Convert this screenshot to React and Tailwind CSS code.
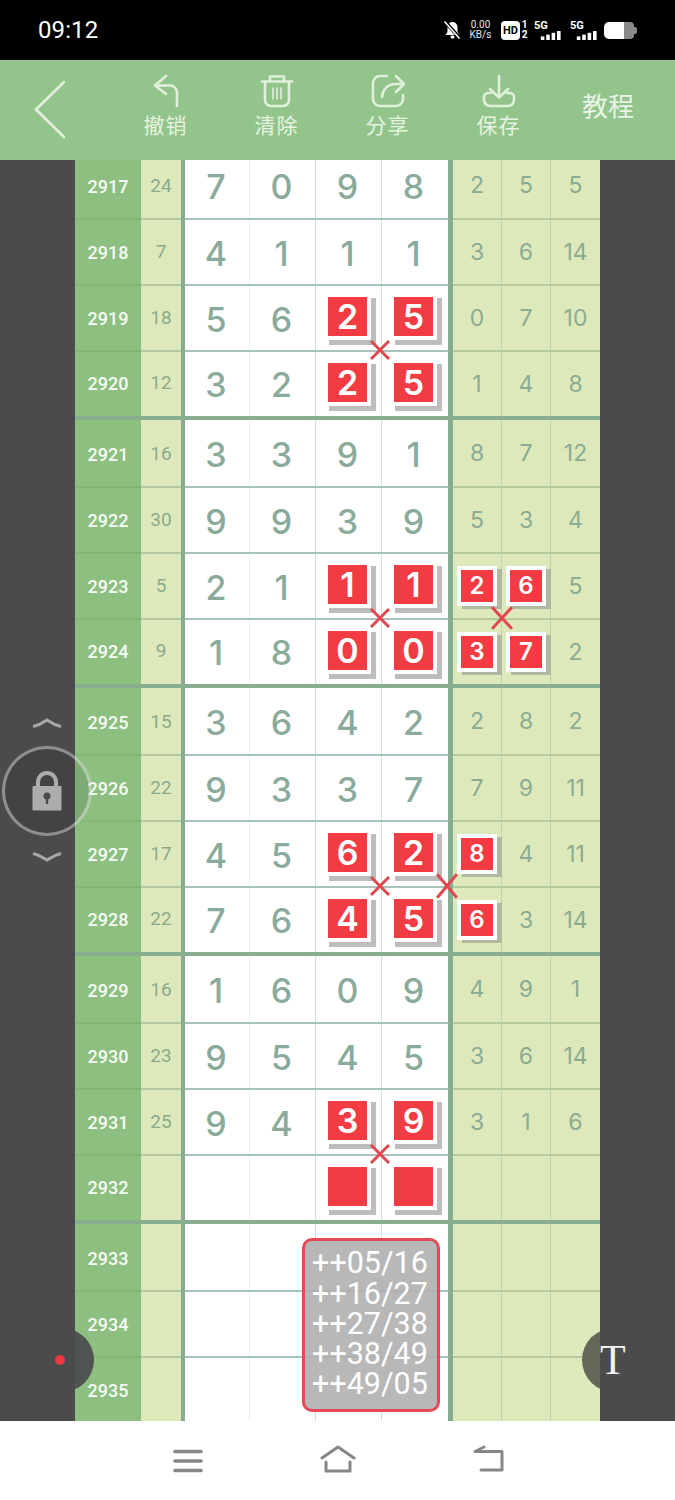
import React from 'react';

// [issue, sum, digits, right digits, red digits, red right digits]
const groups = [
  [
    { id: 2917, sum: 24, d: [7, 0, 9, 8], r: [2, 5, 5] },
    { id: 2918, sum: 7, d: [4, 1, 1, 1], r: [3, 6, 14] },
    { id: 2919, sum: 18, d: [5, 6, 2, 5], r: [0, 7, 10], red: [2, 3] },
    { id: 2920, sum: 12, d: [3, 2, 2, 5], r: [1, 4, 8], red: [2, 3] },
  ],
  [
    { id: 2921, sum: 16, d: [3, 3, 9, 1], r: [8, 7, 12] },
    { id: 2922, sum: 30, d: [9, 9, 3, 9], r: [5, 3, 4] },
    { id: 2923, sum: 5, d: [2, 1, 1, 1], r: [2, 6, 5], red: [2, 3], redR: [0, 1] },
    { id: 2924, sum: 9, d: [1, 8, 0, 0], r: [3, 7, 2], red: [2, 3], redR: [0, 1] },
  ],
  [
    { id: 2925, sum: 15, d: [3, 6, 4, 2], r: [2, 8, 2] },
    { id: 2926, sum: 22, d: [9, 3, 3, 7], r: [7, 9, 11] },
    { id: 2927, sum: 17, d: [4, 5, 6, 2], r: [8, 4, 11], red: [2, 3], redR: [0] },
    { id: 2928, sum: 22, d: [7, 6, 4, 5], r: [6, 3, 14], red: [2, 3], redR: [0] },
  ],
  [
    { id: 2929, sum: 16, d: [1, 6, 0, 9], r: [4, 9, 1] },
    { id: 2930, sum: 23, d: [9, 5, 4, 5], r: [3, 6, 14] },
    { id: 2931, sum: 25, d: [9, 4, 3, 9], r: [3, 1, 6], red: [2, 3] },
    { id: 2932, sum: '', d: ['', '', '', ''], r: ['', '', ''], red: [2, 3] },
  ],
  [
    { id: 2933, sum: '', d: ['', '', '', ''], r: ['', '', ''] },
    { id: 2934, sum: '', d: ['', '', '', ''], r: ['', '', ''] },
    { id: 2935, sum: '', d: ['', '', '', ''], r: ['', '', ''] },
  ],
];

const rowHeights = ['h-[68px]', 'h-[66px]', 'h-[66px]', 'h-[64px]'];
const labelShift = ['pt-[2px]', '', '', 'pb-[2px]'];
const digitWidths = ['w-[65px] pr-[2px] border-r border-[#e8f0f1]', 'w-[66px] pr-[2px] border-r border-[#cfdfdd]', 'w-[66px] pr-[2px] border-r border-[#cfdfdd]', 'w-[66px] pr-[3px]'];
const rightWidths = ['w-[49px] border-r border-[#bdd4a8]', 'w-[49px] border-r border-[#bdd4a8]', 'w-[49px]'];

const popupLines = ['++05/16', '++16/27', '++27/38', '++38/49', '++49/05'];

function Row({ row, index }) {
  const last = index === 3;
  const line = last ? '' : 'border-b-2';
  return (
    <div className={`flex ${rowHeights[index]}`}>
      <div className={`w-[66px] flex items-center justify-center bg-[#8cbf80] text-[#f6fbf4] text-[18px] font-medium ${line} ${labelShift[index]} border-[#84b678]`}>
        {row.id}
      </div>
      <div className={`w-[40px] flex items-center justify-center bg-[#dee9bb] text-[#8ba98b] text-[19px] ${line} ${labelShift[index]} border-[#b3c9a4]`}>
        {row.sum}
      </div>
      <div className="w-[4px] bg-[#86ad8f]"></div>
      <div className={`w-[263px] flex bg-white ${line} border-[#a8c2bc]`}>
        {row.d.map((n, i) => (
          <div key={i} className={`${digitWidths[i]} flex items-center justify-center font-['Inter',sans-serif] font-medium text-[34px] text-[#8aab9b]`}>
            {row.red && row.red.includes(i) ? (
              <div className="-mt-[3px] w-[47px] h-[47px] border-4 border-white bg-[#f23b42] shadow-[5px_5px_0_#bdbdbd] flex items-center justify-center text-white font-semibold text-[34px]">
                {n}
              </div>
            ) : (
              <span className={last ? 'pt-[1px]' : 'pt-[3px]'}>{n}</span>
            )}
          </div>
        ))}
      </div>
      <div className="w-[5px] bg-[#86ad8f]"></div>
      <div className={`w-[147px] flex bg-[#dee9bb] ${line} border-[#b3cb9f]`}>
        {row.r.map((n, i) => (
          <div key={i} className={`${rightWidths[i]} flex items-center justify-center font-['Inter',sans-serif] text-[23px] text-[#8bab92]`}>
            {row.redR && row.redR.includes(i) ? (
              <div className="shrink-0 -mt-[1px] w-[40px] h-[40px] border-4 border-white bg-[#f23b42] shadow-[5px_3px_0_#b1b8a1] flex items-center justify-center text-white font-semibold text-[24px]">
                {n}
              </div>
            ) : (
              <span className={last ? '' : 'pt-[1px]'}>{n}</span>
            )}
          </div>
        ))}
      </div>
    </div>
  );
}

function Cross({ className }) {
  return (
    <svg className={`absolute z-10 ${className}`} viewBox="0 0 20 20" preserveAspectRatio="none">
      <path d="M1 1L19 19M19 1L1 19" stroke="#e2474f" strokeWidth="3" fill="none" vectorEffect="non-scaling-stroke" />
    </svg>
  );
}

function HeaderAction({ label, children }) {
  return (
    <div className="w-[111px] flex flex-col items-center pt-[14px]">
      <div className="h-[34px] flex items-center justify-center">{children}</div>
      <span className="mt-[5px] text-[21px] leading-[26px] tracking-[1px] text-[#e6f3e1]">{label}</span>
    </div>
  );
}

function Signal() {
  return (
    <div className="w-[28px] h-[19px] flex flex-col">
      <span className="text-[11px] leading-[10px] font-bold text-white">5G</span>
      <svg width="28" height="10" viewBox="0 0 28 10" fill="#fff">
        <rect x="6" y="6" width="4" height="4" />
        <rect x="12" y="4" width="4" height="6" />
        <rect x="18" y="2" width="4" height="8" />
        <rect x="24" y="0" width="4" height="10" />
      </svg>
    </div>
  );
}

function StatusBar() {
  return (
    <div className="h-[60px] bg-black flex items-center pl-[38px] text-white">
      <span className="text-[24px] tracking-[0.1px]">09:12</span>
      <div className="ml-auto mr-[38px] flex items-center">
        <svg width="19" height="18" viewBox="0 0 19 18">
          <path d="M9.5 1a5 5 0 0 1 5 5v5l2 3H2.5l2-3V6a5 5 0 0 1 5-5z" fill="#fff" />
          <rect x="7.5" y="14.5" width="4" height="3" rx="1.5" fill="#fff" />
          <path d="M2 0.5L17 17.5" stroke="#000" strokeWidth="3.5" />
          <path d="M1.5 0.5L16.5 17.5" stroke="#fff" strokeWidth="1.6" />
        </svg>
        <div className="ml-[7px] w-[23px] flex flex-col items-center text-[10px] leading-[10px] text-[#e8e8e8]">
          <span>0.00</span>
          <span>KB/s</span>
        </div>
        <div className="ml-[9px] w-[19px] h-[19px] rounded-[4px] bg-white flex items-center justify-center text-black text-[11px] leading-none font-bold">
          HD
        </div>
        <div className="ml-[2px] w-[5px] flex flex-col items-center text-[10px] leading-[10px] font-bold">
          <span>1</span>
          <span>2</span>
        </div>
        <div className="ml-[7px]">
          <Signal />
        </div>
        <div className="ml-[8px]">
          <Signal />
        </div>
        <div className="ml-[6px] w-[33px] h-[17px] flex items-center">
          <div className="w-[20px] h-[17px] rounded-l-[5px] bg-white"></div>
          <div className="w-[10px] h-[17px] rounded-r-[4px] bg-[#8a8a8a]"></div>
          <div className="w-[3px] h-[7px] rounded-r-[2px] bg-[#8a8a8a]"></div>
        </div>
      </div>
    </div>
  );
}

function Header() {
  const stroke = { fill: 'none', stroke: '#e0f0db', strokeWidth: 2.6, strokeLinecap: 'round', strokeLinejoin: 'round' };
  return (
    <div className="h-[100px] bg-[#93c48b] flex">
      <div className="w-[110px] flex items-center pl-[33px]">
        <svg width="34" height="60" viewBox="0 0 34 60" {...stroke}>
          <path d="M31 2L3 29.5L31 57" />
        </svg>
      </div>
      <HeaderAction label="撤销">
        <svg width="28" height="34" viewBox="0 0 28 34" {...stroke}>
          <path d="M14 2L3 11.5L14 20M3 11.5H18a7 7 0 0 1 7 7V32" />
        </svg>
      </HeaderAction>
      <HeaderAction label="清除">
        <svg width="34" height="34" viewBox="0 0 34 34" {...stroke}>
          <path d="M2 7.5H32M10 7V2.5H24V7M5 7.5V26a6 6 0 0 0 6 6H23a6 6 0 0 0 6-6V7.5" />
          <path d="M13 14V25M17 14V25M21 14V25" strokeWidth="1.6" />
        </svg>
      </HeaderAction>
      <HeaderAction label="分享">
        <svg width="34" height="34" viewBox="0 0 34 34" {...stroke}>
          <path d="M16 2H9a7 7 0 0 0-7 7V25a7 7 0 0 0 7 7H25a7 7 0 0 0 7-7V21" />
          <path d="M11 23C12 15 17 10 25 10H32M25 2L33 10L25 18" />
        </svg>
      </HeaderAction>
      <HeaderAction label="保存">
        <svg width="34" height="34" viewBox="0 0 34 34" {...stroke}>
          <path d="M17 2V23M8 15L17 23.5L26 15" />
          <path d="M9 19H6a4 4 0 0 0-4 4v3a6 6 0 0 0 6 6H26a6 6 0 0 0 6-6v-3a4 4 0 0 0-4-4H25" />
        </svg>
      </HeaderAction>
      <div className="flex items-center pl-[28px] pb-[6px] text-[26px] text-[#e9f4e5]">教程</div>
    </div>
  );
}

function LockControl() {
  return (
    <div className="absolute z-30 left-[2px] top-[553px] w-[90px] h-[130px] flex flex-col items-center">
      <svg className="absolute top-[5px]" width="30" height="10" viewBox="0 0 30 10" fill="none" stroke="#a8a8a8" strokeWidth="3">
        <path d="M1 8.5Q8 7 15 2Q22 7 29 8.5" />
      </svg>
      <div className="absolute top-[33px] w-[90px] h-[90px] rounded-full border-[3px] border-white/40 bg-black/10 flex items-center justify-center">
        <svg width="30" height="40" viewBox="0 0 30 40">
          <path d="M6 17V11a9 9 0 0 1 18 0V17" fill="none" stroke="#adadad" strokeWidth="4" />
          <rect x="0.5" y="15" width="29" height="24.5" rx="1" fill="#adadad" />
          <circle cx="15" cy="25" r="3.5" fill="#4b4b4b" />
          <rect x="13.8" y="26" width="2.4" height="7" fill="#4b4b4b" />
        </svg>
      </div>
      <svg className="absolute top-[139px]" width="30" height="10" viewBox="0 0 30 10" fill="none" stroke="#a8a8a8" strokeWidth="3">
        <path d="M1 1.5Q8 3 15 8Q22 3 29 1.5" />
      </svg>
    </div>
  );
}

function Board() {
  return (
    <div className="relative h-[1261px] overflow-hidden flex">
      <div className="relative z-20 w-[75px] bg-[#4b4b4b]"></div>

      <div className="w-[525px] -mt-[8px]">
        {groups.map((group, g) => (
          <div key={g}>
            {group.map((row, r) => (
              <Row key={row.id} row={row} index={r} />
            ))}
            {group.length === 4 && <div className="h-[4px] bg-[#88ad8f]"></div>}
          </div>
        ))}
      </div>

      <div className="relative z-20 w-[75px] bg-[#4b4b4b]"></div>

      <Cross className="left-[370px] top-[180px] w-[20px] h-[20px]" />
      <Cross className="left-[370px] top-[448px] w-[20px] h-[20px]" />
      <Cross className="left-[491px] top-[446px] w-[22px] h-[24px]" />
      <Cross className="left-[370px] top-[716px] w-[20px] h-[20px]" />
      <Cross className="left-[436px] top-[713px] w-[22px] h-[26px]" />
      <Cross className="left-[370px] top-[984px] w-[20px] h-[20px]" />

      {/* popup over the last rows */}
      <div className="absolute z-10 left-[302px] top-[1078px] w-[138px] h-[174px] pr-[2px] pb-[2px] rounded-[10px] border-[3px] border-[#e34a55] bg-[#b0b0b0]/90 flex flex-col items-center justify-center text-white text-[30.5px] leading-[30.2px]">
        {popupLines.map((t) => (
          <span key={t} className="block">{t}</span>
        ))}
      </div>

      <div className="absolute z-10 left-[30px] top-[1168px] w-[64px] h-[64px] rounded-full bg-[#505450]"></div>
      <div className="absolute z-30 left-[55px] top-[1195px] w-[10px] h-[10px] rounded-full bg-[#ee3a3f]"></div>

      <div className="absolute z-10 left-[582px] top-[1168px] w-[64px] h-[64px] rounded-full bg-[#63685a]"></div>
      <span className="absolute z-30 left-[600px] top-[1179px] font-['Liberation_Serif',serif] text-[42px] leading-[42px] text-[#f1f1f1]">T</span>

      <LockControl />
    </div>
  );
}

function NavBar() {
  return (
    <div className="h-[79px] bg-white flex">
      <div className="pl-[173px] pt-[28px]">
        <svg width="30" height="24" viewBox="0 0 30 24" fill="none" stroke="#868686" strokeWidth="3.6" strokeLinecap="round">
          <path d="M2 2.5H28M2 12H28M2 21.5H28" />
        </svg>
      </div>
      <div className="pl-[117px] pt-[24px]">
        <svg width="36" height="28" viewBox="0 0 36 28" fill="none" stroke="#868686" strokeWidth="3" strokeLinecap="round" strokeLinejoin="round">
          <path d="M2 13L18 2L34 13M6 17V26H30V17" />
        </svg>
      </div>
      <div className="pl-[117px] pt-[24px]">
        <svg width="32" height="28" viewBox="0 0 32 28" fill="none" stroke="#868686" strokeWidth="3" strokeLinecap="round" strokeLinejoin="round">
          <path d="M11 2L2 6.5H29V25H8" />
        </svg>
      </div>
    </div>
  );
}

export default function App() {
  return (
    <div className="w-[675px] h-[1500px] overflow-hidden font-['Roboto','Noto_Sans_CJK_SC',sans-serif]">
      <StatusBar />
      <Header />
      <Board />
      <NavBar />
    </div>
  );
}
